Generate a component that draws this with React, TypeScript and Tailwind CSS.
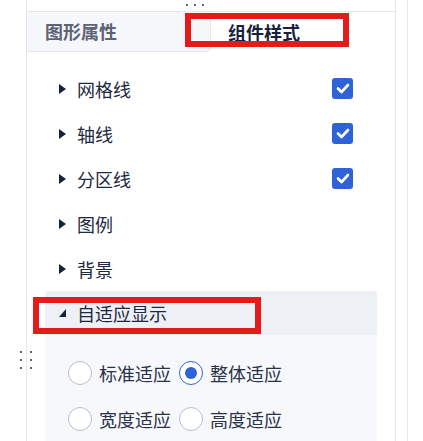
import React from "react";

const font = { fontFamily: '"Noto Sans CJK SC", "Noto Sans", sans-serif' };

function Caret() {
  return (
    <svg width="7" height="10" viewBox="0 0 7 10" className="shrink-0">
      <polygon points="0,0 7,5 0,10" fill="#16213a" />
    </svg>
  );
}

function Check() {
  return (
    <div className="w-[21px] h-[21px] rounded-[3px] bg-[#2f62d6] flex items-center justify-center">
      <svg width="14" height="11" viewBox="0 0 14 11">
        <path d="M2 5.5 L5.5 9 L12 2" stroke="#fff" strokeWidth="2.6" fill="none" strokeLinecap="round" strokeLinejoin="round" />
      </svg>
    </div>
  );
}

function Radio({ label, checked }: { label: string; checked?: boolean }) {
  return (
    <div className="flex items-center gap-[7px] w-[111px]">
      <div
        className={`w-[24px] h-[24px] rounded-full border flex items-center justify-center bg-white ${
          checked ? "border-[#2f62d6]" : "border-[#b9bdc7]"
        }`}
      >
        {checked && <div className="w-[12px] h-[12px] rounded-full bg-[#2f62d6]" />}
      </div>
      <span className="text-[18px] leading-none text-[#2a3348]">{label}</span>
    </div>
  );
}

export default function App() {
  const rows = [
    { name: "网格线", checked: true },
    { name: "轴线", checked: true },
    { name: "分区线", checked: true },
    { name: "图例", checked: false },
    { name: "背景", checked: false },
  ];

  return (
    <div className="relative w-[423px] h-[441px] overflow-hidden bg-white flex" style={font}>
      <div className="w-[26px] shrink-0" />

      {/* main panel */}
      <div className="w-[370px] shrink-0 border-x border-[#e4e6eb]">
        <div className="h-[11px] flex items-start pl-[159px] pt-[4px] gap-[6px]">
          <span className="w-[2px] h-[2px] rounded-full bg-[#333]" />
          <span className="w-[2px] h-[2px] rounded-full bg-[#333]" />
          <span className="w-[2px] h-[2px] rounded-full bg-[#333]" />
        </div>

        {/* tabs */}
        <div className="flex h-[41px] border-t border-[#e4e6eb]">
          <div className="w-[184px] bg-[#f5f7fb] border-b border-r border-[#e4e6eb] rounded-br-[5px] flex items-center pl-[18px]">
            <span className="text-[18px] font-bold text-[#5b6374]">图形属性</span>
          </div>
          <div className="flex-1 flex items-center pl-[17px]">
            <span className="text-[18px] font-bold text-[#17213b]">组件样式</span>
          </div>
        </div>

        {/* tree */}
        <div className="flex flex-col px-[18px] pt-[14px]">
          {rows.map((r) => (
            <div key={r.name} className="h-[45px] shrink-0 flex items-center pl-[14px] pr-[24px]">
              <Caret />
              <span className="ml-[11px] text-[18px] leading-none text-[#1e2840]">{r.name}</span>
              <div className="ml-auto">{r.checked && <Check />}</div>
            </div>
          ))}

          <div className="h-[44px] shrink-0 bg-[#edf0f5] rounded-t-[3px] flex items-center pl-[14px]">
            <svg width="7" height="8" viewBox="0 0 7 8" className="shrink-0">
              <polygon points="7,0 7,8 0,8" fill="#16213a" />
            </svg>
            <span className="ml-[11px] text-[18px] leading-none text-[#1e2840]">自适应显示</span>
          </div>
          <div className="bg-[#f7f8fc] h-[120px] shrink-0 pl-[23px] pt-[26px] flex flex-col gap-[22px]">
            <div className="flex">
              <Radio label="标准适应" />
              <Radio label="整体适应" checked />
            </div>
            <div className="flex">
              <Radio label="宽度适应" />
              <Radio label="高度适应" />
            </div>
          </div>
        </div>
      </div>

      <div className="w-[11px] shrink-0" />
      <div className="flex-1 border-l border-[#e4e6eb]" />

      {/* drag handle */}
      <div className="absolute left-[20px] top-[351px] grid grid-cols-2 gap-x-[8px] gap-y-[6px]">
        {[0, 1, 2, 3, 4, 5].map((i) => (
          <span key={i} className="w-[2px] h-[2px] rounded-full bg-[#333]" />
        ))}
      </div>

      {/* red annotation boxes */}
      <div className="absolute left-[185px] top-[13px] w-[164px] h-[34px] border-[6px] border-[#e41b1b]" />
      <div className="absolute left-[33px] top-[297px] w-[228px] h-[37px] border-[6px] border-[#e41b1b]" />
    </div>
  );
}
